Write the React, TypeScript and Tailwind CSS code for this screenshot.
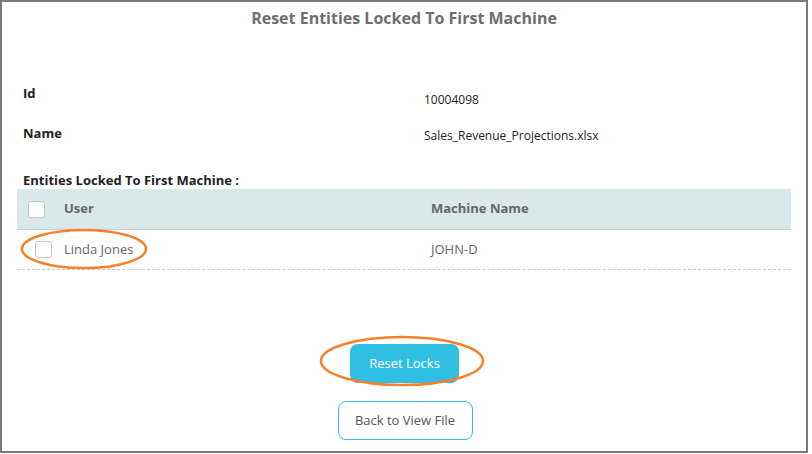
import React from "react";

const Box = ({ className }: { className: string }) => (
  <span className={`block w-[17px] h-[17px] rounded-[3px] border border-[#c4c4c4] bg-white ${className}`} />
);

const App = () => {
  return (
    <div className="w-[812px] h-[454px] bg-white font-['Open_Sans',sans-serif]">
      <div className="relative w-[808px] h-[453px] border-2 border-[#7b7b7b]">
        {/* title */}
        <h1 className="text-center pt-[5px] text-[16px] font-bold text-[#6e6e6e] leading-[22px]">
          Reset Entities Locked To First Machine
        </h1>

        {/* details */}
        <div className="mt-[54px] px-[21px] text-[13px]">
          <div className="flex h-[40px]">
            <span className="w-[401px] font-bold text-[#222] pt-[1px]">Id</span>
            <span className="pt-[8px] text-[12px] text-[#222]">10004098</span>
          </div>
          <div className="flex h-[40px]">
            <span className="w-[401px] font-bold text-[#222] pt-[1px]">Name</span>
            <span className="pt-[4px] text-[12px] text-[#222]">Sales_Revenue_Projections.xlsx</span>
          </div>
          <div className="font-bold text-[#222] pt-[8px] leading-[18px]">Entities Locked To First Machine :</div>
        </div>

        {/* table */}
        <div className="mx-[15px] text-[13px]">
          <div className="flex items-center h-[41px] bg-[#d9e8e8] border-b border-[#c5d0d0]">
            <Box className="ml-[11px] mr-[19px]" />
            <span className="w-[367px] font-bold text-[#666]">User</span>
            <span className="font-bold text-[#666]">Machine Name</span>
          </div>
          <div className="flex items-center h-[40px] border-b border-dashed border-[#c9c9c9]">
            <Box className="ml-[18px] mr-[12px]" />
            <span className="w-[367px] text-[#666]">Linda Jones</span>
            <span className="text-[#666]">JOHN-D</span>
          </div>
        </div>

        {/* buttons */}
        <div className="flex flex-col items-center mt-[74px] gap-[18px] text-[13px]">
          <button className="w-[109px] h-[39px] ml-[1px] rounded-[8px] bg-[#2ebfe3] text-white">Reset Locks</button>
          <button className="w-[135px] h-[39px] ml-[2px] rounded-[8px] border border-[#2ebfe3] bg-white text-[#555]">
            Back to View File
          </button>
        </div>

        {/* annotations */}
        <svg className="absolute left-0 top-0 pointer-events-none" width="808" height="453">
          <ellipse cx="82" cy="247" rx="62" ry="19" fill="none" stroke="#f5822a" strokeWidth="2.5" />
          <ellipse cx="400" cy="359" rx="81" ry="24" fill="none" stroke="#f5822a" strokeWidth="2.5" />
        </svg>
      </div>
    </div>
  );
};

export default App;
